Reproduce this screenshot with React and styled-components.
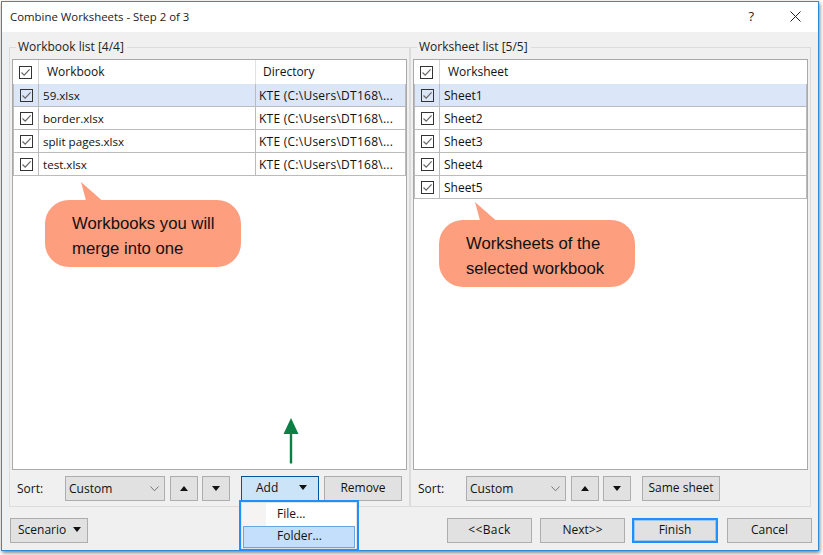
import React from 'react';
import styled, { createGlobalStyle } from 'styled-components';

const workbooks = ['59.xlsx', 'border.xlsx', 'split pages.xlsx', 'test.xlsx'];
const sheets = ['Sheet1', 'Sheet2', 'Sheet3', 'Sheet4', 'Sheet5'];
const directory = 'KTE (C:\\Users\\DT168\\...';

const CheckBox = () => (
  <Check viewBox="0 0 13 13">
    <rect x="0.5" y="0.5" width="12" height="12" fill="none" stroke="#333" />
    <path d="M2.5 6.5 L5.2 9.2 L10.6 3.4" fill="none" stroke="#666" strokeWidth="1.2" />
  </Check>
);

const Caret = ({ up }) => (
  <CaretIcon viewBox="0 0 8 5">
    <path d={up ? 'M4 0 L8 5 L0 5 Z' : 'M0 0 L8 0 L4 5 Z'} fill="#111" />
  </CaretIcon>
);

const Combo = () => (
  <ComboBox>
    Custom
    <svg width="9" height="6" viewBox="0 0 9 6">
      <path d="M0.5 0.5 L4.5 4.8 L8.5 0.5" fill="none" stroke="#777" />
    </svg>
  </ComboBox>
);

export default function App() {
  return (
    <>
      <Global />
      <Window>
        <TitleBar>
          <Title>Combine Worksheets - Step 2 of 3</Title>
          <Help>?</Help>
          <CloseIcon viewBox="0 0 11 11">
            <path d="M0.5 0.5 L10.5 10.5 M10.5 0.5 L0.5 10.5" stroke="#222" fill="none" />
          </CloseIcon>
        </TitleBar>
        <Body>
          <Panels>
            <Group>
              <Legend>Workbook list [4/4]</Legend>
              <List>
                <HeaderRow>
                  <CheckCell><CheckBox /></CheckCell>
                  <HeadCell $flex>Workbook</HeadCell>
                  <HeadCell $dir>Directory</HeadCell>
                </HeaderRow>
                {workbooks.map((name, i) => (
                  <Row key={name} $selected={i === 0}>
                    <CheckCell><CheckBox /></CheckCell>
                    <Cell $flex $narrow>{name}</Cell>
                    <Cell $dir>{directory}</Cell>
                  </Row>
                ))}
              </List>
              <SortBar>
                <SortLabel>Sort:</SortLabel>
                <Combo />
                <ArrowButton $ml={5}><Caret up /></ArrowButton>
                <ArrowButton $ml={4}><Caret /></ArrowButton>
                <AddButton>
                  Add
                  <Caret />
                </AddButton>
                <Button $w={78}>Remove</Button>
              </SortBar>
            </Group>
            <Group>
              <Legend>Worksheet list [5/5]</Legend>
              <List>
                <HeaderRow>
                  <CheckCell><CheckBox /></CheckCell>
                  <HeadCell $flex>Worksheet</HeadCell>
                </HeaderRow>
                {sheets.map((name, i) => (
                  <Row key={name} $selected={i === 0}>
                    <CheckCell><CheckBox /></CheckCell>
                    <Cell $flex>{name}</Cell>
                  </Row>
                ))}
              </List>
              <SortBar>
                <SortLabel>Sort:</SortLabel>
                <Combo />
                <ArrowButton $ml={5}><Caret up /></ArrowButton>
                <ArrowButton $ml={4}><Caret /></ArrowButton>
                <Button $w={78} $ml={11}>Same sheet</Button>
              </SortBar>
            </Group>
          </Panels>
          <Footer>
            <ScenarioButton>
              Scenario
              <Caret />
            </ScenarioButton>
            <Spacer />
            <Button $w={85} $wide>&lt;&lt;Back</Button>
            <Button $w={85} $ml={8}>Next&gt;&gt;</Button>
            <FinishButton>Finish</FinishButton>
            <Button $w={85} $ml={9}>Cancel</Button>
          </Footer>
        </Body>
      </Window>

      <Callout $x={45} $y={182}>
        <Tail viewBox="0 0 22 19">
          <path d="M0 0 L21 18.5 L5 18.5 Z" fill="#fd9e7e" />
        </Tail>
        <Bubble>Workbooks you will<br />merge into one</Bubble>
      </Callout>
      <Callout $x={439} $y={202}>
        <Tail viewBox="0 0 22 19">
          <path d="M0 0 L21 18.5 L5 18.5 Z" fill="#fd9e7e" />
        </Tail>
        <Bubble>Worksheets of the<br />selected workbook</Bubble>
      </Callout>

      <GreenArrow viewBox="0 0 16 46">
        <path d="M8 0 L15.5 16 L9.2 16 L9.2 45.5 L6.8 45.5 L6.8 16 L0.5 16 Z" fill="#0b7f44" />
      </GreenArrow>

      <Menu>
        <MenuItem>File...</MenuItem>
        <MenuItem $active>Folder...</MenuItem>
      </Menu>
    </>
  );
}

const Global = createGlobalStyle`
  html, body {
    margin: 0;
    background: #fff;
  }
  #root {
    position: relative;
    width: 823px;
    height: 555px;
    overflow: hidden;
  }
`;

const Window = styled.div`
  box-sizing: border-box;
  width: 818px;
  height: 550px;
  margin: 1px 0 0 1px;
  display: flex;
  flex-direction: column;
  border: 1px solid #2f8ad4;
  background: #f0f0f0;
  box-shadow: 1px 2px 4px rgba(0, 0, 0, 0.5);
  font-family: 'Open Sans', 'Noto Sans', sans-serif;
  font-size: 12px;
  color: #111;
`;

const TitleBar = styled.div`
  height: 30px;
  display: flex;
  align-items: center;
  padding: 0 17px 2px 8px;
  box-sizing: border-box;
  background: #fff;
`;

const Title = styled.div`
  flex: 1;
  font-size: 11.4px;
  color: #222;
`;

const Help = styled.div`
  margin-right: 36px;
  font-size: 13px;
  color: #222;
`;

const CloseIcon = styled.svg`
  width: 11px;
  height: 11px;
`;

const Body = styled.div`
  flex: 1;
  display: flex;
  flex-direction: column;
  padding: 7px 7px 6px 7px;
  min-height: 0;
`;

const Panels = styled.div`
  height: 468px;
  display: flex;
`;

const Group = styled.fieldset`
  flex: 1;
  min-width: 0;
  margin: 0;
  padding: 4px 2px 5px 2px;
  border: 1px solid #dcdcdc;
  display: flex;
  flex-direction: column;
`;

const Legend = styled.legend`
  padding: 0 3px 0 2px;
  margin-left: 4px;
  line-height: 16px;
  color: #222;
`;

const List = styled.div`
  flex: 1;
  background: #fff;
  border: 1px solid #a9a9a9;
`;

const HeaderRow = styled.div`
  display: flex;
  height: 24px;
`;

const CheckCell = styled.div`
  box-sizing: border-box;
  width: 26px;
  flex: none;
  display: flex;
  align-items: center;
  justify-content: center;
  border-right: 1px solid #d4d4d4;
`;

const Row = styled.div`
  display: flex;
  height: 23px;
  box-sizing: border-box;
  border-bottom: 1px solid #bbb;
  border-left: 1px solid #bbb;
  border-right: 1px solid #bbb;
  background: ${p => (p.$selected ? '#dce6f9' : '#fff')};

  ${CheckCell} {
    width: 25px;
    border-right-color: #bbb;
  }
`;

const Check = styled.svg`
  width: 13px;
  height: 13px;
`;

const HeadCell = styled.div`
  box-sizing: border-box;
  display: flex;
  align-items: center;
  padding-bottom: 2px;
  padding-left: ${p => (p.$dir ? '7px' : '8px')};
  ${p => p.$flex && 'flex: 1;'}
  ${p => p.$dir && 'width: 151px; border-left: 1px solid #e2e2e2;'}
`;

const Cell = styled.div`
  box-sizing: border-box;
  display: flex;
  align-items: center;
  padding-left: 4px;
  white-space: nowrap;
  ${p => p.$flex && 'flex: 1;'}
  ${p => p.$narrow && 'font-size: 11.6px;'}
  ${p => p.$dir && 'width: 150px; padding-left: 3px; letter-spacing: 0.25px; border-left: 1px solid #bbb;'}
`;

const SortBar = styled.div`
  display: flex;
  align-items: center;
  height: 25px;
  margin-top: 6px;
  padding-left: 5px;
`;

const SortLabel = styled.div`
  width: 48px;
`;

const ComboBox = styled.div`
  box-sizing: border-box;
  width: 100px;
  height: 25px;
  display: flex;
  align-items: center;
  justify-content: space-between;
  padding: 0 5px 0 3px;
  background: #e1e1e1;
  border: 1px solid #adadad;
`;

const Button = styled.div`
  box-sizing: border-box;
  width: ${p => p.$w}px;
  height: 25px;
  margin-left: ${p => p.$ml || 0}px;
  padding-bottom: 2px;
  display: flex;
  align-items: center;
  justify-content: center;
  background: #e1e1e1;
  border: 1px solid #adadad;
  ${p => p.$wide && 'letter-spacing: 0.4px;'}
`;

const ArrowButton = styled(Button)`
  width: 28px;
  padding-bottom: 0;
`;

const CaretIcon = styled.svg`
  width: 8px;
  height: 5px;
`;

const AddButton = styled(Button)`
  width: 78px;
  margin: 0 5px 0 11px;
  justify-content: flex-start;
  gap: 21px;
  padding-left: 14px;
  background: #cce4f7;
  border-color: #005499;
`;

const ScenarioButton = styled(Button)`
  width: 78px;
  justify-content: flex-start;
  gap: 7px;
  padding-left: 7px;
`;

const Footer = styled.div`
  display: flex;
  align-items: center;
  margin: 11px -1px 0 1px;
  height: 25px;
`;

const Spacer = styled.div`
  flex: 1;
`;

const FinishButton = styled(Button)`
  width: 86px;
  margin-left: 7px;
  border: 2px solid #1e90ff;
  box-shadow: inset 0 0 0 1px #9ac7ee;
`;

const Callout = styled.div`
  position: absolute;
  left: ${p => p.$x}px;
  top: ${p => p.$y}px;
  width: 196px;
`;

const Tail = styled.svg`
  display: block;
  width: 22px;
  height: 19px;
  margin-left: 36px;
`;

const Bubble = styled.div`
  box-sizing: border-box;
  width: 196px;
  height: 67px;
  margin-top: -1px;
  padding: 11px 0 0 27px;
  border-radius: 24px;
  background: #fd9e7e;
  font-family: 'Liberation Sans', Arial, sans-serif;
  font-size: 16.7px;
  line-height: 25px;
  color: #111;
`;

const GreenArrow = styled.svg`
  position: absolute;
  left: 283px;
  top: 418px;
  width: 16px;
  height: 46px;
`;

const Menu = styled.div`
  position: absolute;
  left: 239px;
  top: 500px;
  box-sizing: border-box;
  width: 120px;
  height: 51px;
  padding: 2px;
  border: 2px solid #1e90ff;
  background: linear-gradient(to right, #f6f4f3 25px, #fff 25px);
  box-shadow: inset 0 0 0 1px #e2e2e2;
  font-family: 'Open Sans', 'Noto Sans', sans-serif;
  font-size: 12px;
  color: #111;
`;

const MenuItem = styled.div`
  box-sizing: border-box;
  height: 22px;
  display: flex;
  align-items: center;
  padding: 0 0 3px 33px;
  background: ${p => (p.$active ? '#c4dffb' : 'transparent')};
  border: 1px solid ${p => (p.$active ? '#66a7e8' : 'transparent')};
`;
